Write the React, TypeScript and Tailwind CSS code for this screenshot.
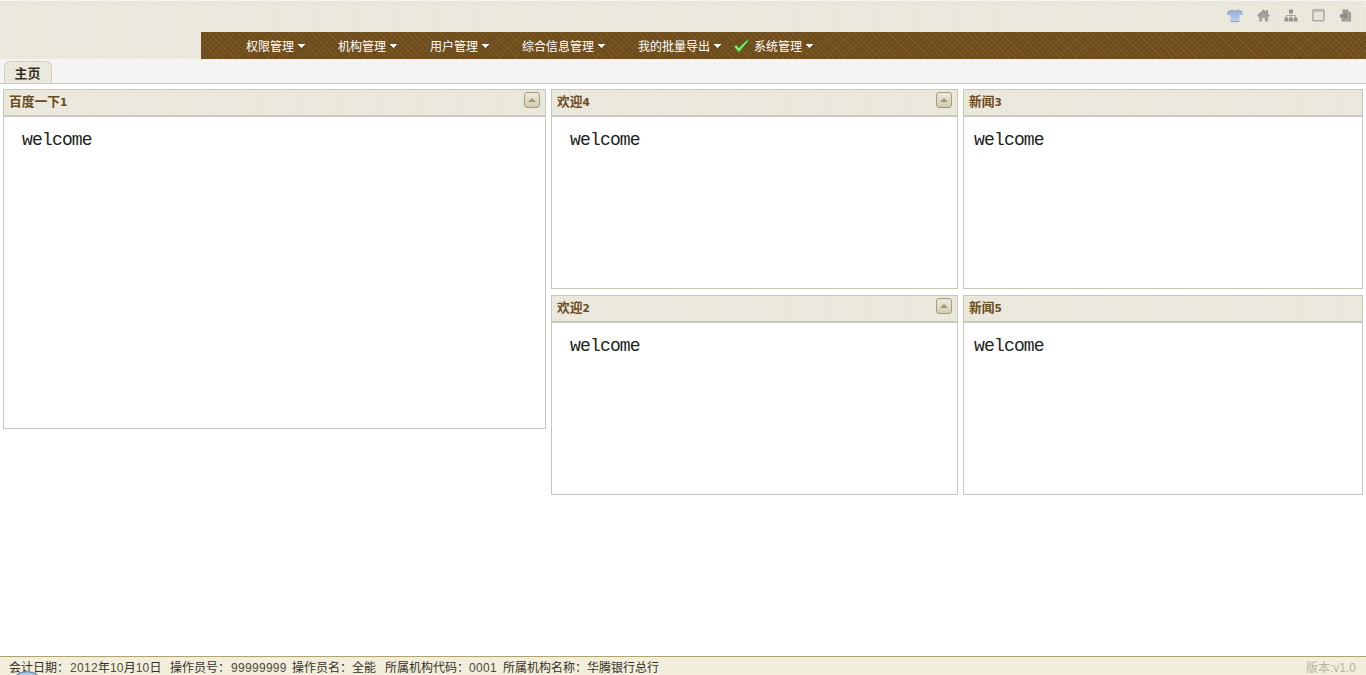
import React from "react";

const cjk = "font-['Liberation_Sans','Noto_Sans_CJK_SC',sans-serif]";
const linen =
  "bg-[#e9e6da] bg-[repeating-linear-gradient(0deg,rgba(255,255,255,0.12)_0_1px,transparent_1px_4px),repeating-linear-gradient(90deg,rgba(255,255,255,0.12)_0_1px,transparent_1px_5px)]";

function TopIcons() {
  return (
    <div className="flex h-8 items-start pt-[9px]">
      <svg className="ml-[1227px] block h-[14px] w-[16px] shrink-0" viewBox="0 0 16 14">
        <defs>
          <linearGradient id="shirt" x1="0" y1="0" x2="0" y2="1">
            <stop offset="0" stopColor="#92afd9" />
            <stop offset="1" stopColor="#bdd0ef" />
          </linearGradient>
        </defs>
        <path d="M5 1 L1.2 2.6 L0.6 5.4 L3.5 6.2 V12.6 H12.5 V6.2 L15.4 5.4 L14.8 2.6 L11 1 Q8 3 5 1Z" fill="url(#shirt)" />
        <path d="M0.6 5.4 L1.2 2.6 L5 1 Q8 3 11 1 L14.8 2.6 L15.4 5.4" fill="none" stroke="#728aa9" strokeWidth="0.9" strokeDasharray="2 1.2" />
        <path d="M3.5 12.6H12.5" stroke="#8198b8" strokeWidth="0.8" />
      </svg>
      <svg className="ml-[14px] block h-[14px] w-[13px] shrink-0" viewBox="0 0 13 14">
        <path d="M6.5 0.5 L0.3 6.5 L1.2 7.8 H2 V12.6 H5.2 V9 H7.8 V12.6 H11 V7.8 H11.8 L12.7 6.5 L11 4.8 V1 H9 V2.8Z" fill="#a5a39c" />
        <path d="M0.8 6.8 L6.5 1.4 L12.2 6.8" fill="none" stroke="#85837d" />
      </svg>
      <svg className="ml-[14px] block h-[14px] w-[14px] shrink-0" viewBox="0 0 14 14">
        <path d="M5 0.5h4v4H5zM0.5 8.5h3.8v4H0.5zM5.1 8.5h3.8v4H5.1zM9.7 8.5h3.8v4H9.7z" fill="#969590" />
        <path d="M7 4.5V8.5M2.5 8.5V6.5H11.5V8.5" fill="none" stroke="#a5a49e" />
      </svg>
      <svg className="ml-[14px] block h-[14px] w-[13px] shrink-0" viewBox="0 0 13 14">
        <rect x="1" y="0.8" width="11" height="11" rx="0.7" fill="#e6e4da" stroke="#a09e97" strokeWidth="1.3" />
        <path d="M1.5 2.2H11.5" stroke="#bbb9b0" strokeWidth="1.4" />
      </svg>
      <svg className="ml-[15px] block h-[14px] w-[12px] shrink-0" viewBox="0 0 12 14">
        <path d="M2.5 0.5H8L11 3.5V12.5H1.5V9H0V5H2.5Z" fill="#9a9993" />
        <path d="M8 0.8V3.5H10.8" fill="#c9c7bf" />
        <path d="M0.5 6.8H4M4 4.6L6.5 6.8L4 9" fill="none" stroke="#7c7b75" />
        <path d="M4 10.8H9.5M7.8 5.8H9.5M7.8 8.3H9.5" stroke="#c5c3bb" strokeWidth="0.7" />
      </svg>
    </div>
  );
}

function Caret() {
  return (
    <svg className="ml-1 block h-1 w-[8px] shrink-0" viewBox="0 0 8 4" shapeRendering="crispEdges">
      <path d="M0 0H8L4 4Z" fill="#fff" />
    </svg>
  );
}

function MenuItem({ label, className, checked }: { label: string; className: string; checked?: boolean }) {
  return (
    <div className={`flex shrink-0 items-center ${className}`}>
      {checked && (
        <svg className="mr-1 -ml-px block h-[14px] w-[16px] shrink-0" viewBox="0 0 16 14">
          <path d="M0.8 7.6L3.4 5.8L5.8 8.8L14.2 0.8L15.6 1.8L5.9 13.4Z" fill="#6fdc54" stroke="#238b24" strokeWidth="0.7" />
          <path d="M2.8 7.4L5.9 10.8L13.8 2.2" fill="none" stroke="#b5f59b" />
        </svg>
      )}
      <span className="pt-px pl-px whitespace-nowrap">{label}</span>
      <span className="-ml-px">
        <Caret />
      </span>
    </div>
  );
}

function CollapseButton() {
  return (
    <button className="mt-[2px] mr-[5px] flex h-4 w-4 items-center justify-center rounded-[3px] border border-[#a39b7f] bg-linear-to-b from-[#eeead8] to-[#d3ccb2]">
      <svg className="block h-1 w-[8px]" viewBox="0 0 8 4">
        <path d="M4 0L8 4H0Z" fill="#a0967a" />
      </svg>
    </button>
  );
}

interface PanelProps {
  title: string;
  num: string;
  height: string;
  inset: string;
  collapsible?: boolean;
}

function Panel({ title, num, height, inset, collapsible }: PanelProps) {
  return (
    <section className={`border border-[#c9c6bc] bg-white ${height}`}>
      <header className={`flex h-[27px] items-start justify-between border-b-2 border-[#c9c8bc] ${linen}`}>
        <h2 className="flex pt-px pl-[5px] text-[12.75px] leading-[22px] font-bold text-[#6b4a1e]">
          <span className="whitespace-nowrap">{title}</span>
          <span className="font-['DejaVu_Sans',sans-serif] text-[10.5px] tracking-[-0.3px]">{num}</span>
        </h2>
        {collapsible && <CollapseButton />}
      </header>
      <p className={`pt-[12px] font-['Liberation_Mono',monospace] text-[18px] leading-[22px] tracking-[-0.83px] text-[#222] ${inset}`}>
        welcome
      </p>
    </section>
  );
}

export default function App() {
  return (
    <div className={`flex h-[675px] w-[1366px] flex-col overflow-hidden bg-white text-[12px] ${cjk}`}>
      <div className={`h-[59px] shrink-0 border-t border-[#f7f6f1] ${linen}`}>
        <div className="-mt-px">
          <TopIcons />
        </div>
        <nav className="ml-[201px] flex h-[27px] items-center bg-[#6f4f1f] bg-[repeating-linear-gradient(45deg,rgba(160,115,50,0.25)_0_1px,transparent_1px_4px),repeating-linear-gradient(-45deg,rgba(70,40,5,0.15)_0_1px,transparent_1px_4px)] pt-px pl-11 text-white">
          <MenuItem label="权限管理" className="w-[92px]" />
          <MenuItem label="机构管理" className="w-[92px]" />
          <MenuItem label="用户管理" className="w-[92px]" />
          <MenuItem label="综合信息管理" className="w-[116px]" />
          <MenuItem label="我的批量导出" className="w-[97px]" />
          <MenuItem label="系统管理" className="w-[100px]" checked />
        </nav>
      </div>

      <div className="flex h-[25px] shrink-0 items-end border-b border-[#c9c7c1] bg-[#f5f3f1] bg-[repeating-linear-gradient(0deg,rgba(255,255,255,0.3)_0_1px,transparent_1px_3px)] pl-1">
        <div className={`flex h-[22px] w-[48px] justify-center rounded-t-[6px] border border-b-0 border-[#cfcdbf] pr-px text-[13px] leading-[23px] font-bold text-[#35301f] ${linen}`}>
          主页
        </div>
      </div>

      <main className="flex grow items-start gap-[5px] pt-[5px] pl-[3px]">
        <div className="w-[543px]">
          <Panel title="百度一下" num="1" height="h-[340px]" inset="pl-[18px]" collapsible />
        </div>
        <div className="flex w-[407px] flex-col gap-[6px]">
          <Panel title="欢迎" num="4" height="h-[200px]" inset="pl-[18px]" collapsible />
          <Panel title="欢迎" num="2" height="h-[200px]" inset="pl-[18px]" collapsible />
        </div>
        <div className="flex w-[400px] flex-col gap-[6px]">
          <Panel title="新闻" num="3" height="h-[200px]" inset="pl-[10px]" />
          <Panel title="新闻" num="5" height="h-[200px]" inset="pl-[10px]" />
        </div>
      </main>

      <footer className="relative flex h-[19px] shrink-0 items-center border-t border-[#b1a273] bg-[#f1edd9] bg-[repeating-linear-gradient(0deg,rgba(255,255,255,0.2)_0_1px,transparent_1px_3px)] pt-[3px] pr-[10px] pl-[9px] text-[12px] leading-[18px] whitespace-nowrap text-[#35301f]">
        <span className="w-[161px]">会计日期：<span className="ml-px tracking-[0.3px] text-[#514b3b]">2012</span>年<span className="tracking-[0.2px] text-[#514b3b]">10</span>月<span className="tracking-[0.2px] text-[#514b3b]">10</span>日</span>
        <span className="w-[122px]">操作员号：<span className="ml-px tracking-[0.3px] text-[#514b3b]">99999999</span></span>
        <span className="w-[93px]">操作员名：全能</span>
        <span className="w-[118px]">所属机构代码：<span className="tracking-[0.3px] text-[#514b3b]">0001</span></span>
        <span>所属机构名称：华腾银行总行</span>
        <span className="ml-auto text-[#b9b5a3]">版本:v1.0</span>
        <svg className="absolute bottom-0 left-[14px] h-[4px] w-[26px]" viewBox="0 0 26 4">
          <ellipse cx="13" cy="12" rx="15" ry="11.3" fill="#a9c9e4" stroke="#587a9e" />
        </svg>
      </footer>
    </div>
  );
}
